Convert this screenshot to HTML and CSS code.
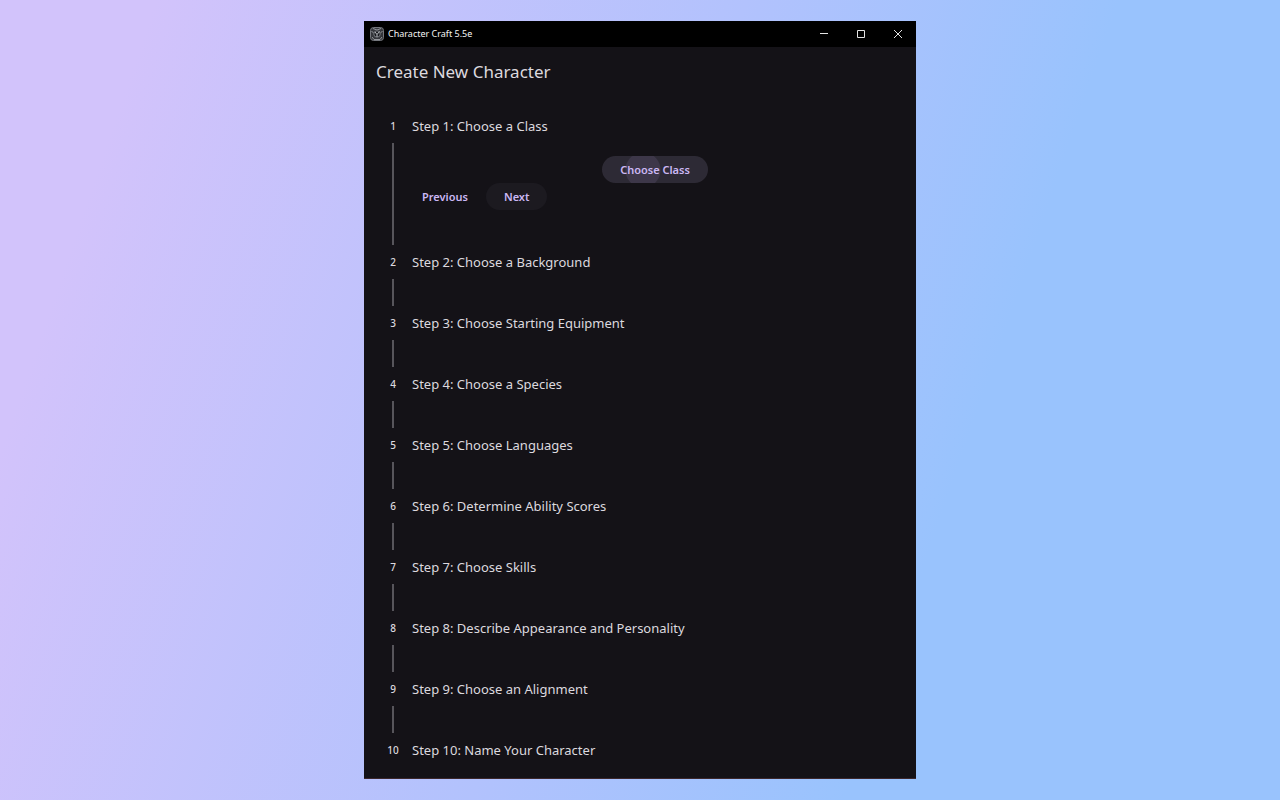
FILE: index.html
```html
<!DOCTYPE html>
<html lang="en">
<head>
<meta charset="utf-8">
<meta name="viewport" content="width=device-width, initial-scale=1">
<title>Character Craft 5.5e</title>
<link rel="stylesheet" href="styles.css">
</head>
<body>
<div class="window">
  <header class="titlebar">
    <svg class="app-icon" viewBox="0 0 14 14" aria-hidden="true">
      <rect x="0.5" y="0.5" width="13" height="13" rx="3" fill="#34363b" stroke="#74777d"/>
      <path d="M3 1.500 7 3l4-1.500M1.500 4 4 6.500M12.500 4 10 6.500M2 10l2 2.500h6l2-2.500" fill="none" stroke="#92959a"/>
      <circle cx="7" cy="7" r="3.200" fill="#17191d" stroke="#74777d"/>
      <path d="M5 5l2 2.500L9.500 4.500M7 7.500V10" fill="none" stroke="#b9bcc1"/>
    </svg>
    <span class="app-name">Character Craft 5.5e</span>
    <div class="controls">
      <button class="control" type="button" aria-label="Minimize"><svg viewBox="0 0 10 10"><path d="M1 4.500h8"/></svg></button>
      <button class="control" type="button" aria-label="Maximize"><svg viewBox="0 0 10 10"><path d="M1.500 1.500h7v7h-7z"/></svg></button>
      <button class="control" type="button" aria-label="Close"><svg viewBox="0 0 10 10"><path d="M1 1l8 8M9 1l-8 8"/></svg></button>
    </div>
  </header>
  <main class="content">
    <h1 class="heading">Create New Character</h1>
    <ol class="stepper">
      <li class="step">
        <span class="number">1</span><h2 class="title">Step 1: Choose a Class</h2>
        <div class="line"></div>
        <div class="panel">
          <button class="btn choose" type="button">Choose Class</button>
          <div class="actions">
            <button class="btn previous" type="button">Previous</button>
            <button class="btn next" type="button">Next</button>
          </div>
        </div>
      </li>
      <li class="step"><span class="number">2</span><h2 class="title">Step 2: Choose a Background</h2><div class="line"></div></li>
      <li class="step"><span class="number">3</span><h2 class="title">Step 3: Choose Starting Equipment</h2><div class="line"></div></li>
      <li class="step"><span class="number">4</span><h2 class="title">Step 4: Choose a Species</h2><div class="line"></div></li>
      <li class="step"><span class="number">5</span><h2 class="title">Step 5: Choose Languages</h2><div class="line"></div></li>
      <li class="step"><span class="number">6</span><h2 class="title">Step 6: Determine Ability Scores</h2><div class="line"></div></li>
      <li class="step"><span class="number">7</span><h2 class="title">Step 7: Choose Skills</h2><div class="line"></div></li>
      <li class="step"><span class="number">8</span><h2 class="title">Step 8: Describe Appearance and Personality</h2><div class="line"></div></li>
      <li class="step"><span class="number">9</span><h2 class="title">Step 9: Choose an Alignment</h2><div class="line"></div></li>
      <li class="step"><span class="number">10</span><h2 class="title">Step 10: Name Your Character</h2></li>
    </ol>
  </main>
</div>
</body>
</html>
```
FILE: styles.css
```css
* { box-sizing: border-box; }

body {
  margin: 0;
  min-height: 100vh;
  display: flex;
  justify-content: center;
  align-items: center;
  background: linear-gradient(109deg, #d2c3fb 10%, #b2c2fd 48%, #99c3fd 72%);
  font-family: "Noto Sans", "Open Sans", sans-serif;
  color: #dcd9df;
}

.window {
  width: 100%;
  max-width: 552px;
  background: #141217;
  border-bottom: 1px solid #3c272c;
}

.titlebar {
  display: flex;
  align-items: center;
  gap: 4px;
  height: 26px;
  padding-left: 6px;
  background: #000;
  color: #f4f4f4;
}

.app-icon { width: 14px; height: 14px; }
.app-name { font-size: 9px; line-height: 16px; }
.controls { display: flex; margin-left: auto; }

.control {
  display: grid;
  place-items: center;
  width: 37px;
  height: 24px;
  padding: 0;
  border: 0;
  background: none;
}

.control svg {
  width: 10px;
  height: 10px;
  fill: none;
  stroke: #e4e4e4;
}

.content { padding: 12px 12px 11px; }

.heading {
  margin: 0 0 24px;
  font-size: 17px;
  line-height: 26px;
  font-weight: 400;
}

.stepper {
  margin: 0;
  padding: 0;
  list-style: none;
}

.step {
  display: grid;
  grid-template-columns: 34px 1fr;
  grid-template-rows: 34px;
  align-items: center;
}

.number {
  font-size: 10px;
  line-height: 16px;
  font-weight: 500;
  text-align: center;
}

.title {
  margin: 0;
  padding-left: 2px;
  font-size: 13px;
  line-height: 20px;
  font-weight: 400;
}

.line {
  width: 2px;
  height: 100%;
  min-height: 27px;
  justify-self: center;
  background: #57555b;
}

.panel {
  display: flex;
  flex-direction: column;
  padding: 13px 6px 35px 2px;
}

.btn {
  height: 27px;
  padding: 0 18px;
  border: 0;
  border-radius: 14px;
  background: none;
  color: #cbb8f4;
  font: 600 11px/16px "Noto Sans", "Open Sans", sans-serif;
}

.choose {
  align-self: center;
  background: radial-gradient(circle at 41px 14px, #3d3749 17px, #2d2a35 18px);
}

.actions { display: flex; gap: 8px; }
.previous { padding: 0 10px; }
.next { background: #1c1a20; }
```
